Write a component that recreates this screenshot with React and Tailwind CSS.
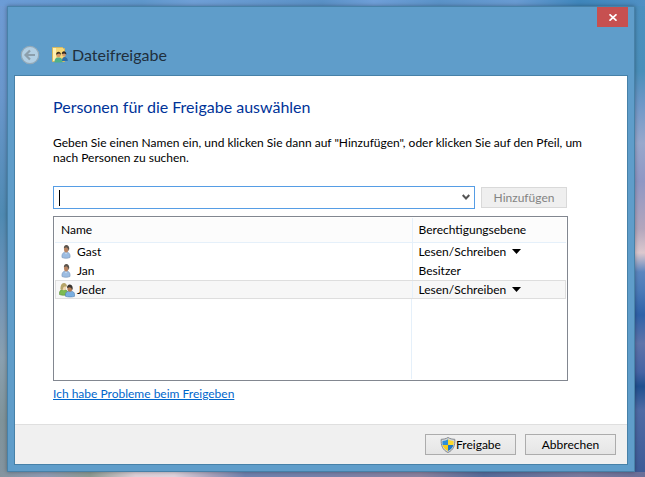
import { useState } from "react";

const people = [
  { name: "Gast", icon: "user", level: "Lesen/Schreiben", editable: true },
  { name: "Jan", icon: "user", level: "Besitzer", editable: false },
  { name: "Jeder", icon: "group", level: "Lesen/Schreiben", editable: true },
];

function BackIcon() {
  return (
    <svg viewBox="0 0 20 20" className="size-5" fill="none">
      <circle cx="10" cy="10" r="8.7" fill="#b3d0e4" stroke="#93a9b8" strokeWidth="1.2" />
      <path d="M15 10H6.500M10 5.500L5.500 10L10 14.500" stroke="#8c9fac" strokeWidth="2.2" />
    </svg>
  );
}

function FolderIcon() {
  return (
    <svg viewBox="0 0 16 16" className="size-4">
      <path d="M0.500 0.500h10l1 1h1v13h-12z" fill="#f6d978" stroke="#e2b94f" strokeWidth="0.8" />
      <path d="M1 1h3v13h-3z" fill="#fff0b0" />
      <path d="M2.500 15.500c0-4 1.500-5 4-5s4 1 4 5z" fill="#4fb08a" />
      <path d="M10 14c0-3 1-4 2.500-4s3.300 1 3.300 4z" fill="#2f6fa8" />
      <circle cx="6.500" cy="8.200" r="2" fill="#d99a66" />
      <path d="M4 7.800c0-4 5-4 5 0l-2-1.200z" fill="#3c3022" />
      <circle cx="12" cy="7.600" r="1.900" fill="#d39a70" />
      <path d="M9.800 7c0-4 4.600-3.500 4.600 0.500l-2-1z" fill="#33291f" />
    </svg>
  );
}

function UserIcon() {
  return (
    <svg viewBox="0 0 16 16" className="size-4">
      <path d="M3 13.500c-0.500-4 1.500-5.500 4-5.500s4.500 1.500 4 5.500c-2 1-6 1-8 0z" fill="#9dbde2" stroke="#7692b5" strokeWidth="0.6" />
      <path d="M6 8.500l1 2 1-2z" fill="#dce9f5" />
      <ellipse cx="7.200" cy="5" rx="2.200" ry="3.500" fill="#b98563" />
      <path d="M4.800 4.300c0-4.800 6-4.600 5.400 1l-0.700 2c0-2-0.600-3.300-2.200-4z" fill="#5a544d" />
    </svg>
  );
}

function GroupIcon() {
  return (
    <svg viewBox="0 0 16 16" className="size-4">
      <path d="M0.500 12.500c-0.300-4 1.500-5 4-5s4.500 1 4.500 5c-2 1-6.500 1-8.500 0z" fill="#7dbb52" stroke="#548c34" strokeWidth="0.6" />
      <ellipse cx="4.800" cy="5" rx="2.500" ry="3.200" fill="#f0d6ae" />
      <path d="M1.500 7.500c-0.800-8 6.500-8 6.500-3-2-0.300-3.500 0-3.800 1.500l-0.700 2z" fill="#b5a468" />
      <path d="M6.500 14.300c-0.400-4.300 1.500-5.100 4.500-5.100s5 0.800 4.600 5.100c-2 0.900-7 0.900-9.100 0z" fill="#79aee0" stroke="#4d7dae" strokeWidth="0.6" />
      <ellipse cx="10.800" cy="6.500" rx="2.400" ry="3.200" fill="#b57d55" />
      <path d="M8 6c-0.200-5 6-4.700 5.700 0.500l-0.700 2c0-1.800-0.800-3-2.300-3.300z" fill="#38332e" />
    </svg>
  );
}

function ShieldIcon() {
  return (
    <svg viewBox="0 0 16 16" className="size-4">
      <path d="M8 0.500c2 1.300 4.300 1.800 6.800 1.800 0.400 6-1.300 10.700-6.800 13.200-5.500-2.500-7.200-7.200-6.800-13.200 2.500 0 4.800-0.500 6.800-1.800z" fill="#d4d8dc" stroke="#85898e" strokeWidth="1" />
      <path d="M8 2.300v5.700h-5.400c-0.200-1.300-0.200-2.500-0.100-4.100 2.200-0.100 4-0.600 5.500-1.600z" fill="#2f8fd8" />
      <path d="M8 2.300v5.700h5.400c0.200-1.300 0.200-2.500 0.100-4.100-2.200-0.100-4-0.600-5.500-1.600z" fill="#fbd92e" />
      <path d="M2.600 8h5.400v5.900c-3.200-1.500-4.800-3.400-5.400-5.900z" fill="#f6cd1c" />
      <path d="M13.400 8h-5.400v5.900c3.200-1.500 4.800-3.400 5.400-5.900z" fill="#1f78c6" />
    </svg>
  );
}

export default function App() {
  const [name, setName] = useState("");
  const [selected, setSelected] = useState("Jeder");

  return (
    <div className="flex min-h-screen flex-col bg-[linear-gradient(to_right,#6c9cd6,#5f97cb_22%,#6f9fd6_30%,#5a91c6_50%,#6f9fd8_58%,#5b93c8_68%,#699bd2_80%,#3f86bb_90%,#5090c4),linear-gradient(to_right,#84949f,#8f9bb4_7%,#8c9a93_14%,#ded0d8_21%,#dfd3dd_27%,#a5a0bb_33%,#6f82ae_38%,#7782ab_50%,#8b82a0_65%,#566c9b_75%,#7b7ba0_90%,#6a6f98),linear-gradient(to_bottom,#6f9bd4,#6a97cc_20%,#4f8ab2_45%,#6e93b8_60%,#8aa0b0_75%,#7f939a_88%,#8494a0),linear-gradient(to_bottom,#4c90c0,#4a8fba_15%,#6f98c8_22%,#98a8cc_30%,#8f97c4_38%,#b3a6bc_48%,#dcc8ce_53%,#5b86bf_57%,#4a7ab8_61%,#2f62a8_66%,#5f74aa_72%,#4564a4_78%,#20508f_81%,#4f6ba5_86%,#3c5a96)] bg-[size:100%_6px,100%_5px,50%_100%,50%_100%] bg-[position:top,bottom,left,right] bg-no-repeat pt-[6px] pr-[10px] pb-[5px] pl-[7px] font-['Lato','Open_Sans',sans-serif] text-[12px] leading-[15px] text-black">
      <div className="flex flex-1 flex-col border border-[#4781a8] bg-[#5f9dca] px-[6px] pb-[6px] shadow-[0_0_4px_rgba(0,0,0,0.35)]">
        {/* Title bar */}
        <header className="flex flex-col">
          <button
            type="button"
            aria-label="Schließen"
            className="flex h-5 w-[31px] items-center justify-center self-end bg-[#c75050]"
          >
            <svg viewBox="0 0 8 7" className="h-[7px] w-2" fill="none" stroke="#fff" strokeWidth="1.7">
              <path d="M0.500 0.300L7.500 6.700M7.500 0.300L0.500 6.700" />
            </svg>
          </button>
          <div className="flex h-12 items-center pt-[8px] pl-[6px]">
            <button type="button" disabled aria-label="Zurück">
              <BackIcon />
            </button>
            <span className="ml-3 flex items-center gap-1">
              <FolderIcon />
              <span className="text-[16px] leading-5 text-[#1f2f3c]">Dateifreigabe</span>
            </span>
          </div>
        </header>

        <main className="flex flex-1 flex-col border border-[#4781a8] bg-white">
          <div className="flex-1 pt-[20px] pr-[59px] pl-[38px]">
            <h1 className="text-[16px] leading-[22px] text-[#003399]">
              Personen für die Freigabe auswählen
            </h1>
            <p className="mt-[17px] -mr-[30px]">
              Geben Sie einen Namen ein, und klicken Sie dann auf "Hinzufügen", oder klicken Sie auf den Pfeil, um
              nach Personen zu suchen.
            </p>

            {/* Name input */}
            <div className="mt-[21px] flex items-center gap-[6px] pr-px">
              <div className="flex h-[23px] flex-1 items-center border border-[#569de5] pr-1 pl-[5px]">
                {name === "" && <span className="h-4 w-px bg-black" />}
                <input
                  type="text"
                  aria-label="Name"
                  value={name}
                  onChange={(e) => setName(e.target.value)}
                  className="h-full min-w-0 flex-1 outline-none"
                />
                <button type="button" aria-label="Personen suchen">
                  <svg viewBox="0 0 8 7" className="h-[7px] w-2" fill="none" stroke="#555" strokeWidth="2">
                    <path d="M0.700 1L4 4.500L7.300 1" />
                  </svg>
                </button>
              </div>
              <button
                type="button"
                disabled
                className="h-[21px] w-[86px] border border-[#d9d9d9] bg-[#efefef] text-[#838383]"
              >
                Hinzufügen
              </button>
            </div>

            {/* People list */}
            <div className="mt-[7px] flex h-[165px] flex-col border border-[#828790] p-px">
              <table className="w-full table-fixed border-collapse">
                <thead>
                  <tr className="h-[24px] border-b border-[#e5f0fa] bg-[#fcfcfc] text-left">
                    <th className="border-r border-[#e5f0fa] pl-[6px] font-normal">Name</th>
                    <th className="w-[154px] pl-[6px] font-normal">Berechtigungsebene</th>
                  </tr>
                </thead>
                <tbody>
                  {people.map((p) => (
                    <tr
                      key={p.name}
                      onClick={() => setSelected(p.name)}
                      className={
                        selected === p.name
                          ? "h-[19px] bg-[#f7f7f7] outline outline-[#dedede] -outline-offset-1"
                          : "h-[19px]"
                      }
                    >
                      <td className="border-r border-[#e5f0fa] pl-1">
                        <span className="flex items-center gap-[2px]">
                          {p.icon === "group" ? <GroupIcon /> : <UserIcon />}
                          {p.name}
                        </span>
                      </td>
                      <td className="pl-[6px]">
                        {p.editable ? (
                          <button type="button" className="flex items-center gap-[6px]">
                            {p.level}
                            <svg viewBox="0 0 9 5" className="h-[5px] w-[9px]">
                              <path d="M0 0h9L4.500 5z" fill="#000" />
                            </svg>
                          </button>
                        ) : (
                          p.level
                        )}
                      </td>
                    </tr>
                  ))}
                </tbody>
              </table>
              <div className="flex flex-1">
                <div className="flex-1 border-r border-[#e5f0fa]" />
                <div className="w-[154px]" />
              </div>
            </div>

            <a href="#hilfe" className="mt-[5px] inline-block text-[#0066cc] underline">
              Ich habe Probleme beim Freigeben
            </a>
          </div>

          <footer className="flex justify-end gap-[9px] border-t border-[#dfdfdf] bg-[#f0f0f0] pt-[9px] pr-[11px] pb-[9px]">
            <button
              type="button"
              className="flex h-[21px] w-[91px] items-center justify-center border border-[#acacac] bg-linear-to-b from-[#f0f0f0] to-[#e5e5e5]"
            >
              <ShieldIcon />
              Freigabe
            </button>
            <button
              type="button"
              className="h-[21px] w-[91px] border border-[#acacac] bg-linear-to-b from-[#f0f0f0] to-[#e5e5e5]"
            >
              Abbrechen
            </button>
          </footer>
        </main>
      </div>
    </div>
  );
}
